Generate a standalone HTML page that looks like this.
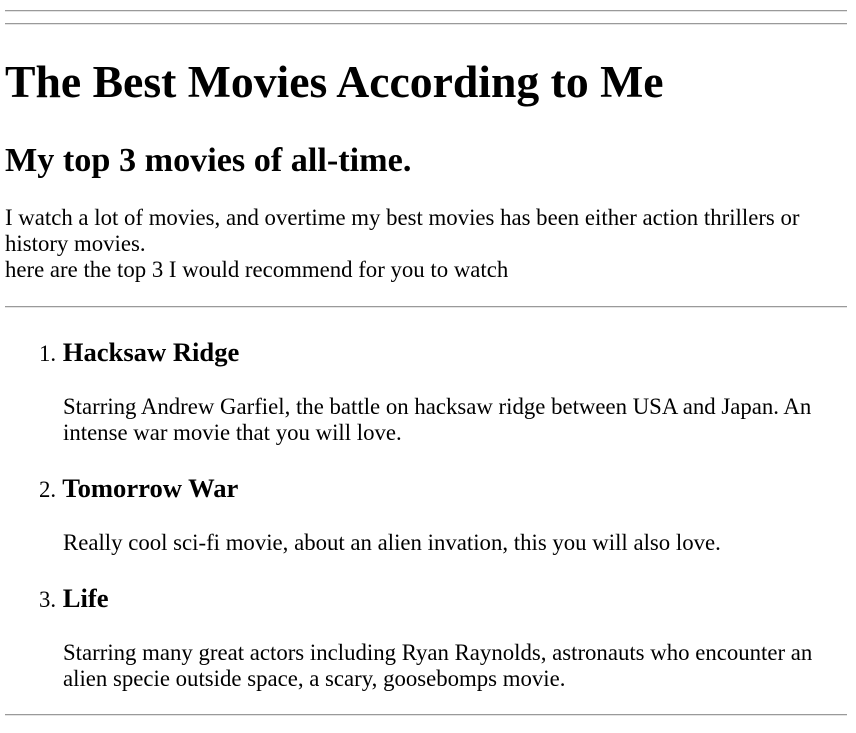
<!DOCTYPE html>
<html><head><meta charset="utf-8"><style>
html,body{margin:0;padding:0;background:#fff;width:856px;height:733px;overflow:hidden}
body{font-family:"Liberation Serif",serif;color:#000;position:relative}
.a{position:absolute;left:5px;margin:0;white-space:nowrap}
.hr{position:absolute;left:5px;width:842px;height:0;border-top:1px solid #9a9a9a;border-bottom:1px solid #e4e4e4}
h1{font-size:45.7px;line-height:52px;font-weight:bold}
h2{font-size:34.2px;line-height:39px;font-weight:bold}
.p{font-size:22.8px;line-height:26px}
.h3{font-size:26.6px;line-height:30px;font-weight:bold}
.num{font-size:22.8px;font-weight:normal}
</style></head><body>
<div class="hr" style="top:10px"></div>
<div class="hr" style="top:23px"></div>
<h1 class="a" style="top:56px">The Best Movies According to Me</h1>
<h2 class="a" style="top:141px">My top 3 movies of all-time.</h2>
<div class="a p" style="top:205px">I watch a lot of movies, and overtime my best movies has been either action thrillers or<br>history movies.<br>here are the top 3 I would recommend for you to watch</div>
<div class="hr" style="top:306px"></div>

<div class="a h3" style="top:337px;left:39px"><span class="num">1.</span> Hacksaw Ridge</div>
<div class="a p" style="top:394px;left:63px">Starring Andrew Garfiel, the battle on hacksaw ridge between USA and Japan. An<br>intense war movie that you will love.</div>

<div class="a h3" style="top:473px;left:39px"><span class="num">2.</span> Tomorrow War</div>
<div class="a p" style="top:530px;left:63px">Really cool sci-fi movie, about an alien invation, this you will also love.</div>

<div class="a h3" style="top:583px;left:39px"><span class="num">3.</span> Life</div>
<div class="a p" style="top:640px;left:63px">Starring many great actors including Ryan Raynolds, astronauts who encounter an<br>alien specie outside space, a scary, goosebomps movie.</div>

<div class="hr" style="top:714px"></div>
</body></html>
